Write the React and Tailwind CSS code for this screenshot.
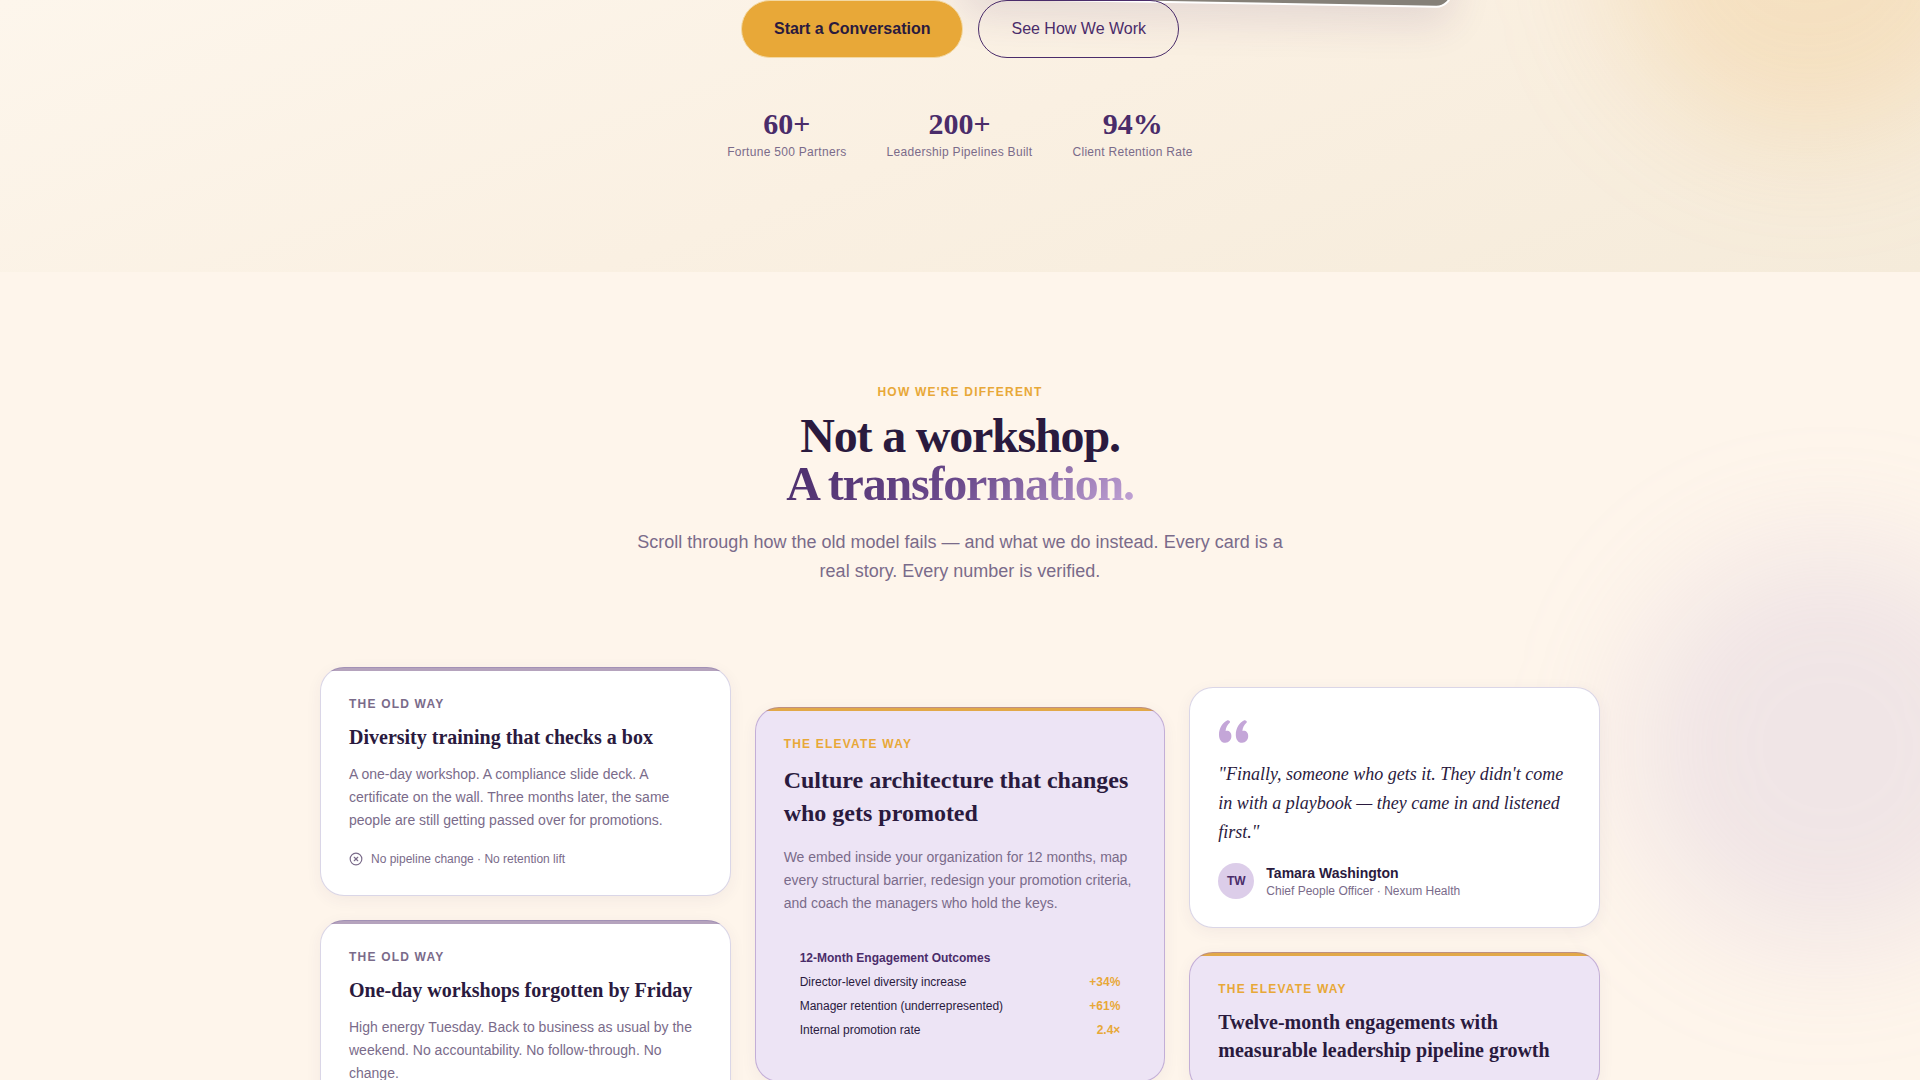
import { CircleX } from 'lucide-react';

const SANS = "font-['Liberation_Sans',Arial,sans-serif]";
const SERIF = "font-['Liberation_Serif','Times_New_Roman',serif]";

const stats = [
    { value: '60+', label: 'Fortune 500 Partners' },
    { value: '200+', label: 'Leadership Pipelines Built' },
    { value: '94%', label: 'Client Retention Rate' },
];

const outcomes = [
    { label: 'Director-level diversity increase', value: '+34%' },
    { label: 'Manager retention (underrepresented)', value: '+61%' },
    { label: 'Internal promotion rate', value: '2.4×' },
];

const Hero = () => {
    return (
        <section className="relative overflow-hidden bg-linear-[160deg,#fdf6ec_0%,#faf0e2_50%,#f5ebda_100%] pb-28">
            <div className="absolute -top-[260px] -right-[90px] size-[400px] rounded-full bg-[#eca848]/20 blur-[60px]" />
            <div className="absolute -top-[494px] left-1/2 h-[480px] w-[492px] origin-bottom-right translate-y-[22px] rotate-1 rounded-2xl border-2 border-white bg-[#858078] shadow-[0_16px_40px_rgba(74,44,106,0.12)]" />

            <div className="relative flex flex-col items-center">
                <div className="flex justify-center gap-[15px]">
                    <button
                        type="button"
                        className="h-[58px] rounded-full border border-[#f3d9a4] bg-[#e8a838] px-8 text-base font-bold text-[#2a1a3e]"
                    >
                        Start a Conversation
                    </button>
                    <button
                        type="button"
                        className="h-[58px] rounded-full border border-[#4a2c6a] px-8 text-base text-[#4a2c6a]"
                    >
                        See How We Work
                    </button>
                </div>

                <dl className="mt-12 flex justify-center gap-10 text-center">
                    {stats.map((stat) => (
                        <div key={stat.label} className="flex flex-col-reverse gap-0.5">
                            <dt className="text-xs tracking-wide text-[#7a6b8a]">
                                {stat.label}
                            </dt>
                            <dd className={`${SERIF} text-[30px] leading-9 font-bold text-[#4a2c6a]`}>
                                {stat.value}
                            </dd>
                        </div>
                    ))}
                </dl>
            </div>
        </section>
    );
};

// the accent bar is a background strip so that the translucent border lies over it
const tones = {
    old: 'border-[#6a5ba0]/25 bg-white bg-linear-to-r from-[#b5a3bd] to-[#b5a3bd]',
    elevate: 'border-[#9a78ba]/50 bg-[#ede4f5] bg-linear-to-r from-[#e2a848] to-[#e2a848]',
    quote: 'border-[#6a5ba0]/25 bg-white',
};

const Card = ({ tone, children }) => {
    return (
        <article
            className={`rounded-3xl border bg-[length:100%_4px] bg-origin-border bg-no-repeat p-7 shadow-[0_4px_16px_rgba(74,44,106,0.06)] ${tones[tone]}`}
        >
            {children}
        </article>
    );
};

const OldWayCard = ({ title, text, result }) => {
    return (
        <Card tone="old">
            <p className="text-xs font-bold tracking-[1.2px] text-[#7a6b8a]">THE OLD WAY</p>
            <h3 className={`${SERIF} mt-[11px] text-xl leading-7 font-bold text-[#2a1a3e]`}>{title}</h3>
            <p className="mt-3 text-sm leading-[23px] text-[#7a6b8a]">{text}</p>
            <div className="mt-[19px] flex items-center gap-2 text-xs text-[#7a6b8a]">
                <CircleX size={14} />
                <span>{result}</span>
            </div>
        </Card>
    );
};

const Different = () => {
    return (
        <section className="relative overflow-hidden px-6 pt-28 pb-28">
            <div className="absolute top-[274px] -right-[110px] size-[400px] rounded-full bg-[#b9a5d0]/20 blur-[60px]" />

            <div className="relative mx-auto max-w-[1280px]">
                <header className="mx-auto max-w-[672px] text-center">
                    <p className="text-xs font-bold tracking-[1.2px] text-[#e8a838]">
                        HOW WE'RE DIFFERENT
                    </p>
                    <h2 className={`${SERIF} mt-3 text-5xl leading-[48px] font-bold tracking-tight text-[#2a1a3e]`}>
                        Not a workshop.
                        <br />
                        <span className="bg-linear-[135deg,#4a2c6a_0%,#6b4a8c_50%,#c4a6d8_100%] bg-clip-text text-transparent">
                            A transformation.
                        </span>
                    </h2>
                    <p className="mt-5 text-lg leading-[29px] text-[#7a6b8a]">
                        Scroll through how the old model fails — and what we do instead. Every card is a
                        real story. Every number is verified.
                    </p>
                </header>

                <div className="mt-[81px] grid grid-cols-1 items-start gap-6 md:grid-cols-3">
                    <div className="flex flex-col gap-6">
                        <OldWayCard
                            title="Diversity training that checks a box"
                            text="A one-day workshop. A compliance slide deck. A certificate on the wall. Three months later, the same people are still getting passed over for promotions."
                            result="No pipeline change · No retention lift"
                        />
                        <OldWayCard
                            title="One-day workshops forgotten by Friday"
                            text="High energy Tuesday. Back to business as usual by the weekend. No accountability. No follow-through. No change."
                            result="No accountability · No follow-through"
                        />
                    </div>

                    <div className="flex flex-col gap-6 md:mt-10">
                        <Card tone="elevate">
                            <p className="text-xs font-bold tracking-[1.2px] text-[#e8a838]">
                                THE ELEVATE WAY
                            </p>
                            <h3 className={`${SERIF} mt-3 text-2xl leading-[33px] font-bold text-[#2a1a3e]`}>
                                Culture architecture that changes who gets promoted
                            </h3>
                            <p className="mt-4 text-sm leading-[23px] text-[#7a6b8a]">
                                We embed inside your organization for 12 months, map every structural
                                barrier, redesign your promotion criteria, and coach the managers who hold
                                the keys.
                            </p>
                            <table className="mx-4 mt-[35px] mb-[11px] w-[calc(100%-32px)] text-xs text-[#2a1a3e]">
                                <caption className="mb-1 text-left font-bold text-[#4a2c6a]">
                                    12-Month Engagement Outcomes
                                </caption>
                                <tbody>
                                    {outcomes.map((row) => (
                                        <tr key={row.label} className="h-6">
                                            <th scope="row" className="text-left font-normal">
                                                {row.label}
                                            </th>
                                            <td className="text-right font-bold text-[#e8a838]">
                                                {row.value}
                                            </td>
                                        </tr>
                                    ))}
                                </tbody>
                            </table>
                        </Card>
                    </div>

                    <div className="flex flex-col gap-6 md:mt-5">
                        <Card tone="quote">
                            <svg
                                width="32"
                                height="32"
                                viewBox="0 0 32 32"
                                fill="#c4a6d8"
                                aria-hidden="true"
                            >
                                <path d="M9.500 4.200c1.200-.4 3.200 1.300 2.400 2.300C9.500 8.700 7.800 11.500 7.600 15c3.400-.7 5.800 1.500 5.800 5.100 0 3.900-2.500 6.700-6 6.700C2.900 26.800 1 23.100 1 18.500 1 12 4.700 6.500 9.500 4.200z" />
                                <path d="M26.300 4.200c1.200-.4 3.200 1.300 2.400 2.300-2.400 2.200-4.100 5-4.300 8.500 3.400-.7 5.800 1.500 5.800 5.100 0 3.900-2.500 6.700-6 6.700-4.500 0-6.400-3.700-6.400-8.300 0-6.500 3.700-12 8.500-14.300z" />
                            </svg>
                            <blockquote className={`${SERIF} mt-3 text-lg leading-[29px] text-[#2a1a3e] italic`}>
                                "Finally, someone who gets it. They didn't come in with a playbook — they came
                                in and listened first."
                            </blockquote>
                            <div className="mt-4 flex items-center gap-3">
                                <div className="flex size-9 items-center justify-center rounded-full bg-[#dccde9] text-xs font-bold text-[#4a2c6a]">
                                    TW
                                </div>
                                <div>
                                    <p className="text-sm leading-5 font-bold text-[#2a1a3e]">
                                        Tamara Washington
                                    </p>
                                    <p className="text-xs text-[#7a6b8a]">
                                        Chief People Officer · Nexum Health
                                    </p>
                                </div>
                            </div>
                        </Card>
                        <Card tone="elevate">
                            <p className="text-xs font-bold tracking-[1.2px] text-[#e8a838]">
                                THE ELEVATE WAY
                            </p>
                            <h3 className={`${SERIF} mt-[11px] text-xl leading-7 font-bold text-[#2a1a3e]`}>
                                Twelve-month engagements with measurable leadership pipeline growth
                            </h3>
                        </Card>
                    </div>
                </div>
            </div>
        </section>
    );
};

const App = () => {
    return (
        <main className={`${SANS} min-h-screen bg-[#fef5eb]`}>
            <Hero />
            <Different />
        </main>
    );
};

export default App;
